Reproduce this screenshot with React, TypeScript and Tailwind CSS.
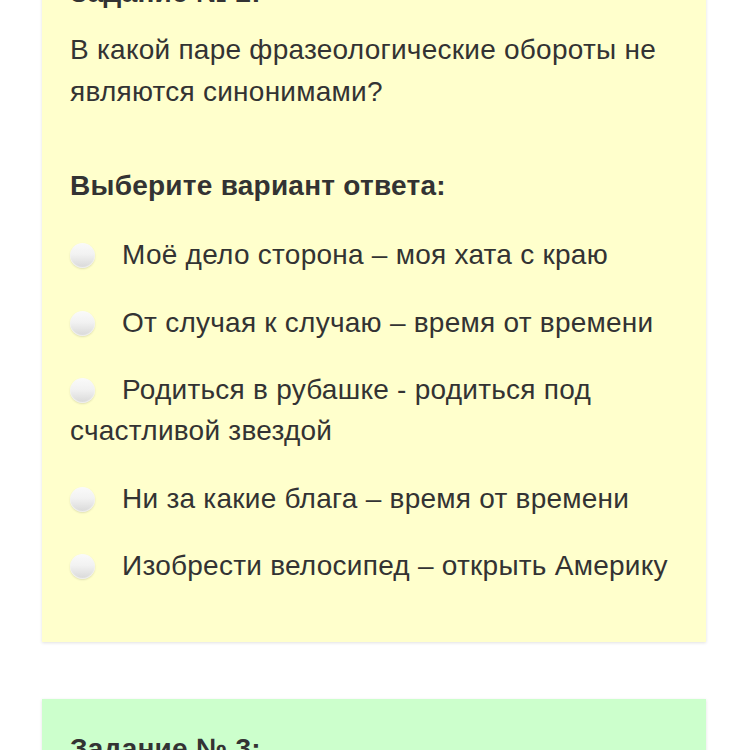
const options = [
  'Моё дело сторона – моя хата с краю',
  'От случая к случаю – время от времени',
  'Родиться в рубашке - родиться под счастливой звездой',
  'Ни за какие блага – время от времени',
  'Изобрести велосипед – открыть Америку',
];

function Radio() {
  return (
    <span className="inline-block align-[-4px] w-[25px] h-[25px] rounded-full mr-[27px] bg-[linear-gradient(to_bottom,#fafafa_0%,#f2f2f2_45%,#d8d8d8_100%)] shadow-[0_1px_2px_rgba(0,0,0,0.12),inset_0_-1px_1px_rgba(255,255,255,0.6)]"></span>
  );
}

export default function App() {
  return (
    <main
      className="min-h-screen bg-white overflow-hidden text-[#333333] tracking-[0.25px]"
      style={{ fontFamily: '"Liberation Sans", Arial, sans-serif' }}
    >
      <div className="-mt-[56px] mx-[42px] flex flex-col gap-[57px]">
        {/* Task 2 */}
        <section className="bg-[#ffffcc] pt-[28px] pb-[56px] px-[28px] shadow-[0_1px_3px_rgba(0,0,0,0.12)]">
          <h2 className="text-[28px] leading-[41px] font-bold">Задание № 2:</h2>
          <p className="mt-[16px] text-[28px] leading-[42px]">
            В какой паре фразеологические обороты не являются синонимами?
          </p>
          <h3 className="mt-[52px] text-[28px] leading-[41px] font-bold">Выберите вариант ответа:</h3>
          <ul className="mt-[28px] flex flex-col gap-[26.5px]">
            {options.map((o) => (
              <li key={o} className="text-[28px] leading-[41px]">
                <Radio />
                {o}
              </li>
            ))}
          </ul>
        </section>

        {/* Task 3 */}
        <section className="bg-[#ccffcc] pt-[29px] pb-[56px] px-[28px] shadow-[0_1px_3px_rgba(0,0,0,0.12)]">
          <h2 className="text-[28px] leading-[41px] font-bold">Задание № 3:</h2>
          <p className="mt-[15px] text-[28px] leading-[42px]">
            Укажите фразеологизм со значением «очень быстро»
          </p>
        </section>
      </div>
    </main>
  );
}
